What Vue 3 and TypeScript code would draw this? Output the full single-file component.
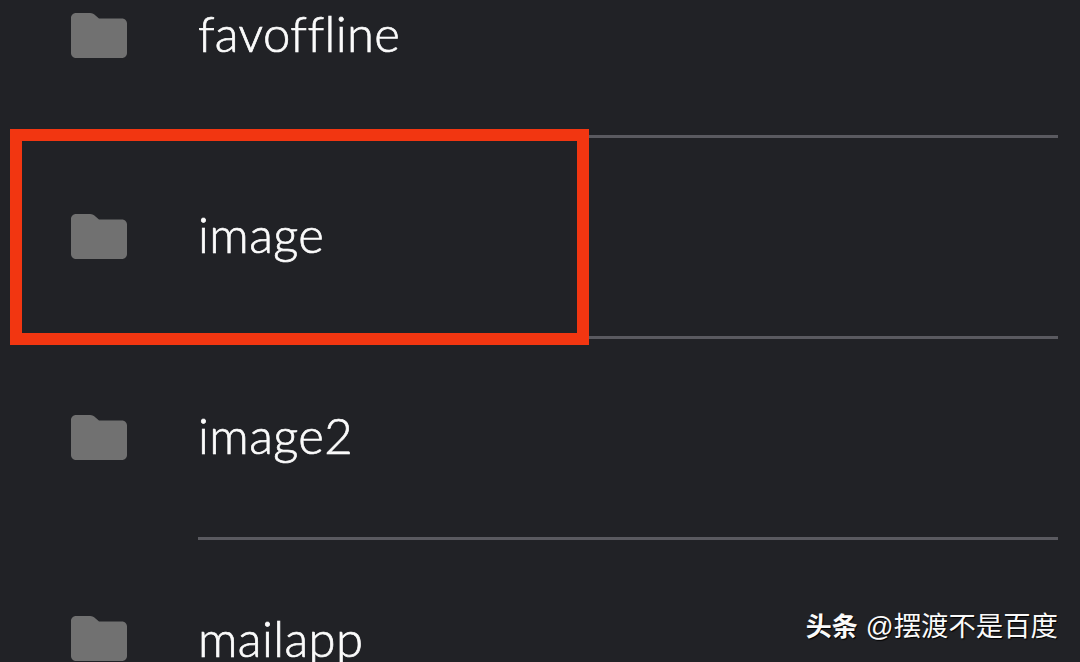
<script setup lang="ts">
const folders: string[] = ['favoffline', 'image', 'image2', 'mailapp']
</script>

<template>
  <main class="screen">
    <ul class="list">
      <li v-for="name in folders" :key="name" class="row">
        <svg class="folder" viewBox="0 0 56 45" aria-hidden="true">
          <path d="M5 0H19C21.500 0 23 1 24.500 2.500L28 5.500H51C53.800 5.500 56 7.700 56 10.500V40C56 42.800 53.800 45 51 45H5C2.200 45 0 42.800 0 40V5C0 2.200 2.200 0 5 0Z" />
        </svg>
        <div class="body"><span class="name">{{ name }}</span></div>
      </li>
    </ul>
    <div class="highlight"></div>
    <div class="mark"><b class="brand">头条</b><span class="author">@摆渡不是百度</span></div>
  </main>
</template>

<style scoped>
.screen {
  position: relative;
  width: 1080px;
  height: 662px;
  overflow: hidden;
  background: #212226;
}
.list {
  list-style: none;
  margin: -65px 0 0;
  padding: 0;
}
.row {
  display: flex;
  align-items: center;
  height: 201px;
  padding-left: 71px;
  padding-right: 22px;
}
.folder {
  flex: none;
  width: 56px;
  height: 45px;
  fill: #717171;
}
.body {
  flex: 1;
  align-self: stretch;
  display: flex;
  align-items: center;
  margin-left: 71px;
  margin-bottom: -2px;
  padding-bottom: 4px;
  border-bottom: 3px solid #5a5a60;
}
.row:last-child .body {
  border-bottom: 0;
}
.name {
  font-family: Lato, "Noto Sans", sans-serif;
  font-size: 49px;
  font-weight: 300;
  font-variant-ligatures: none;
  letter-spacing: 0.4px;
  color: #fbfbfb;
  -webkit-text-stroke: 0.7px #fbfbfb;
}
.highlight {
  position: absolute;
  left: 10px;
  top: 129px;
  width: 579px;
  height: 216px;
  box-sizing: border-box;
  border: 12px solid #f23611;
}
.mark {
  position: absolute;
  right: 22px;
  top: 610px;
  display: flex;
  align-items: center;
  gap: 8px;
  color: #fafafa;
  line-height: 34px;
  text-shadow: 1px 1px 1px #000;
  font-family: "Liberation Sans", "Noto Sans CJK SC", sans-serif;
}
.brand {
  font-size: 26px;
  font-weight: 700;
}
.author {
  font-size: 27.400px;
}
</style>
